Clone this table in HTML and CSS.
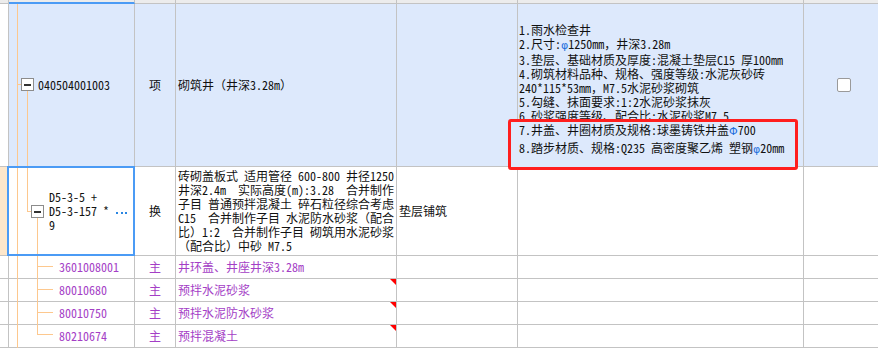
FILE: index.html
```html
<!DOCTYPE html>
<html lang="zh">
<head>
<meta charset="utf-8">
<title>清单</title>
<link rel="stylesheet" href="styles.css">
</head>
<body>
<div class="sheet">
  <!-- header strip -->
  <div class="c hd"></div>
  <div class="c hd sel"></div>
  <div class="c hd"></div>
  <div class="c hd"></div>
  <div class="c hd"></div>
  <div class="c hd"></div>
  <div class="c hd last"></div>

  <!-- row 1 -->
  <div class="c r1 edge"></div>
  <div class="c r1 code1">040504001003</div>
  <div class="c r1 ctr">项</div>
  <div class="c r1 pad">砌筑井（井深3.28m）</div>
  <div class="c r1"></div>
  <div class="c r1 desc">
    <div>1.雨水检查井</div>
    <div>2.尺寸:<span class="phi">φ</span>1250mm，井深3.28m</div>
    <div>3.垫层、基础材质及厚度:混凝土垫层C15 厚100mm</div>
    <div>4.砌筑材料品种、规格、强度等级:水泥灰砂砖</div>
    <div>240*115*53mm，M7.5水泥砂浆砌筑</div>
    <div>5.勾缝、抹面要求:1:2水泥砂浆抹灰</div>
    <div>6.砂浆强度等级、配合比:水泥砂浆M7.5</div>
    <div class="note">
      <div>7.井盖、井圈材质及规格:球墨铸铁井盖<span class="phi">Φ</span>700</div>
      <div class="gap">8.踏步材质、规格:Q235 高密度聚乙烯 塑钢<span class="phi">φ</span>20mm</div>
    </div>
  </div>
  <div class="c r1 last check-cell"><span class="checkbox"></span></div>

  <!-- row 2 -->
  <div class="c peach"></div>
  <div class="c selected code2">
    <div>D5-3-5 +<br>D5-3-157 *<span class="more"></span><br>9</div>
  </div>
  <div class="c ctr">换</div>
  <div class="c pad">
    <div class="pre">砖砌盖板式 适用管径 600-800 井径1250<br>井深2.4m  实际高度(m):3.28  合并制作<br>子目 普通预拌混凝土 碎石粒径综合考虑<br>C15  合并制作子目 水泥防水砂浆（配合<br>比）1:2  合并制作子目 砌筑用水泥砂浆<br>（配合比）中砂 M7.5</div>
  </div>
  <div class="c pad">垫层铺筑</div>
  <div class="c"></div>
  <div class="c last"></div>

  <!-- row 3 -->
  <div class="c"></div>
  <div class="c sub code3">3601008001</div>
  <div class="c ctr sub">主</div>
  <div class="c pad sub">井环盖、井座井深3.28m</div>
  <div class="c"></div>
  <div class="c"></div>
  <div class="c last"></div>

  <!-- row 4 -->
  <div class="c"></div>
  <div class="c sub code3">80010680</div>
  <div class="c ctr sub">主</div>
  <div class="c pad sub flag">预拌水泥砂浆</div>
  <div class="c"></div>
  <div class="c"></div>
  <div class="c last"></div>

  <!-- row 5 -->
  <div class="c"></div>
  <div class="c sub code3">80010750</div>
  <div class="c ctr sub">主</div>
  <div class="c pad sub flag">预拌水泥防水砂浆</div>
  <div class="c"></div>
  <div class="c"></div>
  <div class="c last"></div>

  <!-- row 6 -->
  <div class="c"></div>
  <div class="c sub code3">80210674</div>
  <div class="c ctr sub">主</div>
  <div class="c pad sub flag">预拌混凝土</div>
  <div class="c"></div>
  <div class="c"></div>
  <div class="c last"></div>

  <!-- tree connectors -->
  <svg class="tree" width="60" height="348" viewBox="0 0 60 348">
    <g stroke="#fdc88e" stroke-width="1" fill="none">
      <line x1="17.5" y1="4" x2="17.5" y2="348"/>
      <line x1="17" y1="84.5" x2="21" y2="84.5"/>
      <line x1="27.5" y1="91" x2="27.5" y2="211"/>
      <line x1="27" y1="211.5" x2="31" y2="211.5"/>
      <line x1="37.5" y1="218" x2="37.5" y2="335"/>
      <line x1="37" y1="266.5" x2="53" y2="266.5"/>
      <line x1="37" y1="289.5" x2="53" y2="289.5"/>
      <line x1="37" y1="312.5" x2="53" y2="312.5"/>
      <line x1="37" y1="334.5" x2="53" y2="334.5"/>
    </g>
    <rect x="21.5" y="78.5" width="12" height="12" fill="#fff" stroke="#8c8c8c"/>
    <rect x="24" y="84" width="7" height="2" fill="#333"/>
    <rect x="31.5" y="205.5" width="12" height="12" fill="#fff" stroke="#8c8c8c"/>
    <rect x="34" y="211" width="7" height="2" fill="#333"/>
  </svg>
</div>
</body>
</html>
```

FILE: styles.css
```css
html, body {
  margin: 0;
  padding: 0;
  background: #ffffff;
}

body {
  font-family: "Noto Sans Mono CJK SC", "Noto Sans CJK SC", sans-serif;
  font-size: 12px;
  line-height: 14px;
  color: #111111;
}

.sheet {
  position: relative;
  display: grid;
  grid-template-columns: 9px 126px 41px 221px 121px 286px 74px;
  grid-template-rows: 4px 163px 89px repeat(4, 23px);
  width: 878px;
  height: 348px;
  overflow: hidden;
}

.c {
  box-sizing: border-box;
  border-right: 1px solid #c3c3c3;
  border-bottom: 1px solid #c3c3c3;
  display: flex;
  align-items: center;
  white-space: nowrap;
  min-width: 0;
}

.c.last {
  border-right: none;
}

.pre {
  white-space: pre;
}

.hd {
  background: #ececec;
}

.hd.sel {
  border-bottom: 2px solid #4b9bf5;
}

.r1 {
  background: #dde9fc;
}

.r1.edge {
  background: #ffffff;
}

.peach {
  background: #fde7cb;
}

.ctr {
  justify-content: center;
}

.pad {
  padding-left: 2px;
}

.code1 {
  padding-left: 29px;
}

.desc {
  display: block;
  padding: 19px 0 0 1px;
}

.phi {
  font-family: "DejaVu Sans", sans-serif;
  font-size: 11px;
  color: #1f6fdc;
}

.note {
  position: relative;
  z-index: 1;
}

.note::before {
  content: "";
  position: absolute;
  top: -4px;
  left: -11px;
  right: 5px;
  bottom: -13px;
  border: 3px solid #ff1e1e;
  border-radius: 3px;
  background: #dde9fc;
  z-index: -1;
}

.note .gap {
  margin-top: 2px;
}

.check-cell {
  padding-left: 33px;
}

.checkbox {
  display: inline-block;
  box-sizing: border-box;
  width: 14px;
  height: 14px;
  border: 1px solid #9a9a9a;
  border-radius: 2px;
  background: #ffffff;
}

.selected {
  position: relative;
}

.selected::after {
  content: "";
  position: absolute;
  top: -1px;
  left: -2px;
  right: -1px;
  bottom: -1px;
  border: 2px solid #4b9bf5;
  z-index: 2;
}

.code2 {
  padding-left: 40px;
}

.more {
  display: inline-block;
  width: 11px;
  height: 2px;
  margin-left: 7px;
  vertical-align: middle;
  background: linear-gradient(90deg,
    #2a86e2 0 2px, transparent 2px 4.5px,
    #2a86e2 4.5px 6.5px, transparent 6.5px 9px,
    #2a86e2 9px 11px);
}

.sub {
  color: #a43ec6;
}

.code3 {
  padding-left: 50px;
}

.flag {
  position: relative;
}

.flag::after {
  content: "";
  position: absolute;
  top: 0;
  right: 0;
  width: 0;
  height: 0;
  border-top: 6px solid #ff0000;
  border-left: 6px solid transparent;
}

.tree {
  position: absolute;
  left: 0;
  top: 0;
  z-index: 1;
  pointer-events: none;
}
```
